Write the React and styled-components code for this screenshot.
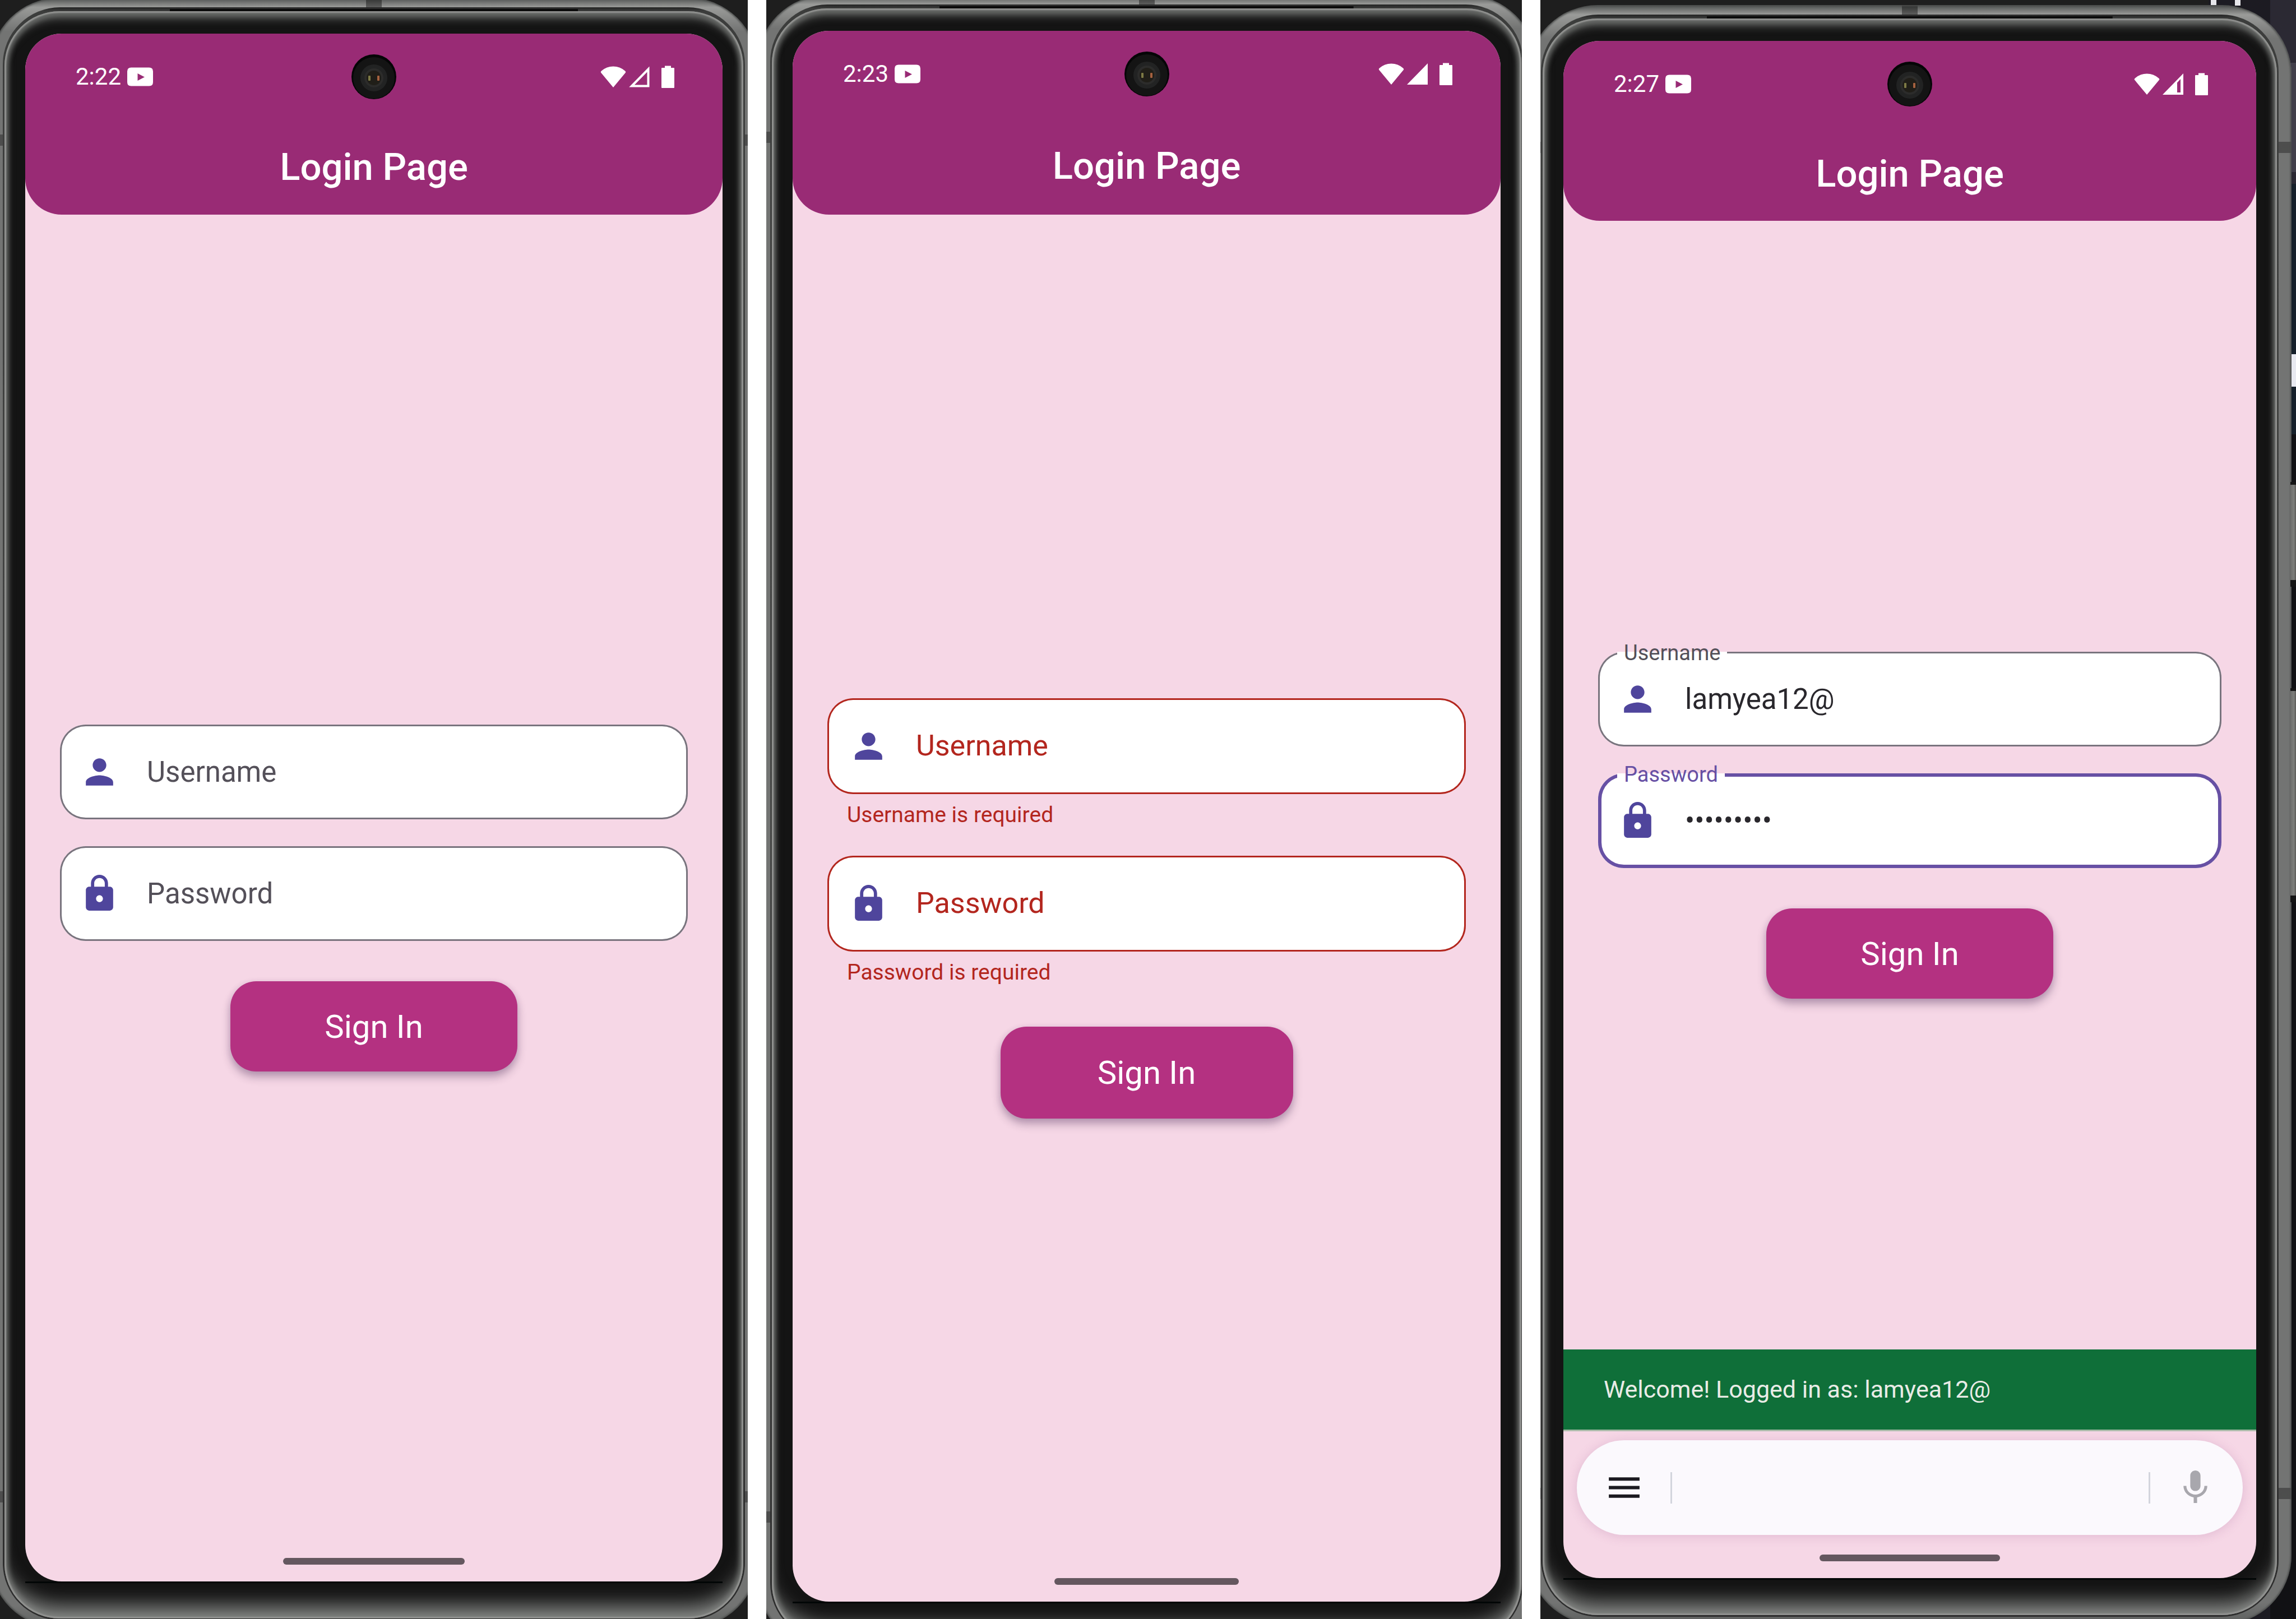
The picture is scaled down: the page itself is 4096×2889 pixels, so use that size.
import React, { useId } from "react";
import styled, { createGlobalStyle, css } from "styled-components";
import { MdLock, MdMenu, MdMic, MdPerson } from "react-icons/md";

const color = {
  plum: "#992b75",
  blush: "#f6d7e6",
  magenta: "#b43181",
  iris: "#4f459c",
  outline: "#79747e",
  focus: "#6750a4",
  error: "#b3261e",
  ink: "#29272c",
  inkSoft: "#545059",
  green: "#0f6f39",
};

const GlobalStyle = createGlobalStyle`
  *, *::before, *::after { box-sizing: border-box; }
  body { margin: 0; background: #fff; font-family: Roboto, "Noto Sans", sans-serif; }
  button, input { font: inherit; }
  svg { display: block; }
`;

/* ---------- Board with the three devices ---------- */

const Board = styled.main`
  display: grid;
  grid-template-columns: 1334fr 1348fr 1348fr;
  gap: 33px;
  height: 100vh;
`;

const desktopBackdrop = css`
  background:
    linear-gradient(#e8e9f0, #e8e9f0) right 0 top 632px / 8px 58px no-repeat,
    linear-gradient(#e6e6ea, #e6e6ea) right 142px top 0 / 10px 10px no-repeat,
    linear-gradient(#e6e6ea, #e6e6ea) right 99px top 0 / 10px 10px no-repeat,
    linear-gradient(
        #2b2933 0 112px,
        #413f4a 112px 307px,
        #2b2933 307px 328px,
        #16202a 328px 775px,
        #111114 775px
      )
      right 0 top 0 / 46px 100% no-repeat,
    linear-gradient(#1c1b22, #1c1b22) right 46px top 0 / 110px 100% no-repeat,
    #1e1e1e;
`;

const Panel = styled.section`
  position: relative;
  display: flex;
  min-width: 0;
  overflow: hidden;
  background: #1e1e1e;
  ${(p) => p.$desktop && desktopBackdrop}
`;

const Body = styled.div`
  flex: 1;
  display: flex;
  margin: ${(p) => p.$margin};
  padding: 17px 23px 14px;
  border-radius: 124px;
  background:
    linear-gradient(#0005, #0005) 0 244px / 100% 20px no-repeat,
    linear-gradient(#0005, #0005) 0 calc(100% - 224px) / 100% 20px no-repeat,
    linear-gradient(#0006, #0006) 50% 0 / 28px 17px no-repeat,
    linear-gradient(#4c4e4d, #9a9b99 17px, #737473 60px, #737473 calc(100% - 40px), #5c5e5d);
  box-shadow: inset 0 0 3px 2px #4c4e4d;
`;

const Groove = styled.div`
  flex: 1;
  display: flex;
  padding: 7px 3px 3px;
  border-radius: 102px;
  background:
    linear-gradient(#0b0b0b, #0b0b0b) 50% 3px / 55% 4px no-repeat,
    linear-gradient(#242424, #3c3d3c 7px, #444544 50%, #2c2c2c);
`;

const Bezel = styled.div`
  flex: 1;
  display: flex;
  padding: 40px 37px 63px;
  border-radius: 98px;
  background: #141414;
  box-shadow:
    inset 0 0 2px 3px #929391,
    inset 0 20px 16px -8px #656765,
    inset 0 -40px 32px -16px #7d7f7d,
    inset 0 0 8px 7px #6a6c6a;
`;

const ScreenSeat = styled.div`
  flex: 1;
  display: flex;
  min-width: 0;
  border-bottom: 3px solid #020606;
`;

const Screen = styled.div`
  position: relative;
  flex: 1;
  display: flex;
  flex-direction: column;
  min-width: 0;
  overflow: hidden;
  border-radius: 65px;
  background: ${color.blush};
`;

const SideButton = styled.span`
  position: absolute;
  right: 0;
  top: ${(p) => p.$top}px;
  width: 10px;
  height: ${(p) => p.$height}px;
  border: solid #151515;
  border-width: 5px 0 12px;
  background: linear-gradient(90deg, #6c6c6a, #7e7f7c 60%, #5b5a57);
`;

/* ---------- App header ---------- */

const Header = styled.header`
  flex: none;
  border-radius: 0 0 65px 65px;
  background: ${color.plum};
  color: #fff;
`;

const StatusBar = styled.div`
  display: flex;
  align-items: center;
  justify-content: space-between;
  height: 154px;
  padding: 0 86px 0 90px;
`;

const StatusGroup = styled.div`
  display: flex;
  align-items: center;
  gap: ${(p) => p.$gap}px;
`;

const Clock = styled.time`
  font-size: 42px;
  line-height: 48px;
`;

const BatterySlot = styled.span`
  padding-left: 16px;
`;

const Camera = styled.span`
  position: absolute;
  top: 36px;
  left: 50%;
  width: 82px;
  height: 82px;
  margin-left: -41px;
`;

const Title = styled.h1`
  margin: 0;
  font-size: 67px;
  font-weight: 500;
  line-height: ${(p) => p.$height}px;
  text-align: center;
`;

const YoutubeGlyph = () => (
  <svg width="48" height="34" viewBox="0 0 48 34" fill="#fff" aria-hidden="true">
    <path
      fillRule="evenodd"
      d="M8 0.5H40Q47 0.5 47 7.500V26.500Q47 33.500 40 33.500H8Q1 33.500 1 26.500V7.500Q1 0.500 8 0.500ZM19.500 11V24L32 17.500Z"
    />
  </svg>
);

const WifiGlyph = () => (
  <svg width="46" height="40" viewBox="0 0 46 40" fill="#fff" aria-hidden="true">
    <path d="M23 39L1 12.500Q0 11 2 9.500Q11 1.500 23 1.500Q35 1.500 44 9.500Q46 11 45 12.500Z" />
  </svg>
);

const SignalGlyph = ({ level }) => (
  <svg width="39" height="40" viewBox="0 0 39 40" aria-hidden="true">
    {level === "full" && <path d="M1 39L38 1V39Z" fill="#fff" />}
    {level === "empty" && (
      <path d="M6 36.500H35.500V6.500Z" fill="none" stroke="#fff" strokeWidth="4" />
    )}
    {level === "partial" && (
      <path fillRule="evenodd" d="M1 39L38 1V39ZM27 17.500L33 11V35H27Z" fill="#fff" />
    )}
  </svg>
);

const BatteryGlyph = () => (
  <svg width="23" height="42" viewBox="0 0 23 42" fill="#fff" aria-hidden="true">
    <path d="M6 5V1.500H17V5H22Q23 5 23 6V40Q23 41 22 41H1Q0 41 0 40V6Q0 5 1 5Z" />
  </svg>
);

const Lens = () => (
  <svg width="82" height="82" viewBox="0 0 82 82" aria-hidden="true">
    <circle cx="41" cy="41" r="40" fill="#050506" />
    <circle cx="41" cy="43" r="37" fill="#141414" />
    <circle cx="41" cy="43" r="24" fill="#222323" />
    <circle cx="41" cy="43" r="17" fill="#2c2c2b" />
    <circle cx="41" cy="43" r="13" fill="#201e18" />
    <rect x="31" y="39" width="4" height="9" rx="1" fill="#7d7a45" />
    <rect x="47" y="39" width="4" height="9" rx="1" fill="#a5613f" />
  </svg>
);

/* ---------- Login form ---------- */

const Content = styled.div`
  position: relative;
  flex: 1;
  display: flex;
  flex-direction: column;
  justify-content: center;
`;

const Form = styled.form`
  display: flex;
  flex-direction: column;
  gap: ${(p) => (p.$large ? 50 : 48)}px;
  padding: 0 62px;
`;

const stroke = (p) =>
  p.$state === "error"
    ? `3px ${color.error}`
    : p.$state === "focus"
    ? `6px ${color.focus}`
    : `3px ${color.outline}`;

const FieldBox = styled.div`
  position: relative;
  display: flex;
  align-items: center;
  gap: 48px;
  height: ${(p) => (p.$large ? 171 : 169)}px;
  padding: 0 ${(p) => (p.$large ? 37 : 34)}px;
  border-radius: 46px;
  background: #fff;
  color: ${color.iris};
  box-shadow: inset 0 0 0 ${stroke};
`;

const labelColor = { error: color.error, focus: color.focus, idle: color.inkSoft };

const Label = styled.label`
  position: absolute;
  color: ${(p) => labelColor[p.$state]};
  ${(p) =>
    p.$floating
      ? css`
          top: -18px;
          left: 34px;
          padding: 0 12px;
          font-size: 38px;
          line-height: 40px;
          background: linear-gradient(${color.blush} 18px, #fff 18px);
        `
      : css`
          left: ${p.$large ? 158 : 155}px;
          font-size: ${p.$large ? 52 : 51}px;
          line-height: 60px;
        `}
`;

const Input = styled.input`
  flex: 1;
  min-width: 0;
  height: 72px;
  padding: 0;
  border: 0;
  outline: 0;
  background: transparent;
  color: ${color.ink};
  font-size: 51px;
`;

const Helper = styled.p`
  margin: 14px 0 0;
  padding-left: 35px;
  color: ${color.error};
  font-size: 39px;
  line-height: 46px;
`;

const SignIn = styled.button`
  align-self: center;
  width: ${(p) => (p.$large ? 522 : 512)}px;
  height: ${(p) => (p.$large ? 164 : 161)}px;
  margin-top: 24px;
  padding: 0;
  border: 0;
  border-radius: 46px;
  background: ${color.magenta};
  color: #fff;
  font-size: 58px;
  box-shadow: 0 10px 16px rgba(60, 30, 70, 0.32), 0 2px 12px rgba(90, 40, 120, 0.12);
`;

function Field({ icon: Icon, label, type = "text", value = "", state = "idle", error, large }) {
  const id = useId();
  return (
    <div>
      <FieldBox $state={state} $large={large}>
        <Icon size={73} aria-hidden="true" />
        <Label htmlFor={id} $state={state} $floating={value !== ""} $large={large}>
          {label}
        </Label>
        <Input id={id} type={type} defaultValue={value} autoComplete="off" />
      </FieldBox>
      {error && <Helper>{error}</Helper>}
    </div>
  );
}

/* ---------- Bottom of the screen ---------- */

const Snackbar = styled.div`
  position: absolute;
  right: 0;
  bottom: -3px;
  left: 0;
  padding: 46px 72px 47px;
  border-bottom: 3px solid #aabbaa;
  background: ${color.green};
  color: #e9ece6;
  font-size: 43px;
  line-height: 50px;
`;

const KeyboardTray = styled.div`
  flex: none;
  height: 265px;
  padding: 19px 24px 0;
`;

const Toolbar = styled.div`
  display: flex;
  align-items: center;
  height: 169px;
  padding: 0 48px;
  border-radius: 85px;
  background: #fbf9fd;
  box-shadow: 0 2px 20px rgba(140, 70, 130, 0.2);
`;

const ToolButton = styled.button`
  display: flex;
  padding: 0;
  border: 0;
  background: none;
  color: ${(p) => (p.$muted ? "#a8a7ad" : "#1b1a20")};
`;

const Divider = styled.span`
  width: 3px;
  height: 56px;
  margin: 0 44px 0 46px;
  background: #d3d5dd;
`;

const Spacer = styled.span`
  flex: 1;
`;

const HomeHandle = styled.span`
  position: absolute;
  bottom: 30px;
  left: 37%;
  width: 26%;
  height: 12px;
  border-radius: 6px;
  background: #64575f;
`;

/* ---------- Device ---------- */

function Phone({ time, signal, margin, titleHeight, large, username, password, snackbar, desktop }) {
  return (
    <Panel $desktop={desktop}>
      {desktop && (
        <>
          <SideButton $top={860} $height={187} />
          <SideButton $top={1228} $height={382} />
        </>
      )}
      <Body $margin={margin}>
        <Groove>
          <Bezel>
            <ScreenSeat>
              <Screen>
                <Header>
                  <StatusBar>
                    <StatusGroup $gap={10}>
                      <Clock>{time}</Clock>
                      <YoutubeGlyph />
                    </StatusGroup>
                    <StatusGroup $gap={4}>
                      <WifiGlyph />
                      <SignalGlyph level={signal} />
                      <BatterySlot>
                        <BatteryGlyph />
                      </BatterySlot>
                    </StatusGroup>
                  </StatusBar>
                  <Title $height={titleHeight}>Login Page</Title>
                  <Camera>
                    <Lens />
                  </Camera>
                </Header>
                <Content>
                  <Form $large={large} onSubmit={(e) => e.preventDefault()}>
                    <Field icon={MdPerson} label="Username" large={large} {...username} />
                    <Field
                      icon={MdLock}
                      label="Password"
                      type="password"
                      large={large}
                      {...password}
                    />
                    <SignIn type="submit" $large={large}>
                      Sign In
                    </SignIn>
                  </Form>
                  {snackbar && <Snackbar role="status">{snackbar}</Snackbar>}
                </Content>
                {snackbar && (
                  <KeyboardTray>
                    <Toolbar>
                      <ToolButton type="button" aria-label="Menu">
                        <MdMenu size={73} />
                      </ToolButton>
                      <Divider />
                      <Spacer />
                      <Divider />
                      <ToolButton type="button" aria-label="Voice input" $muted>
                        <MdMic size={73} />
                      </ToolButton>
                    </Toolbar>
                  </KeyboardTray>
                )}
                <HomeHandle />
              </Screen>
            </ScreenSeat>
          </Bezel>
        </Groove>
      </Body>
    </Panel>
  );
}

export default function App() {
  return (
    <>
      <GlobalStyle />
      <Board>
        <Phone time="2:22" signal="empty" margin="-4px -18px -16px -18px" titleHeight={169} />
        <Phone
          time="2:23"
          signal="full"
          margin="-9px -25px -52px -16px"
          titleHeight={174}
          large
          username={{ state: "error", error: "Username is required" }}
          password={{ state: "error", error: "Password is required" }}
        />
        <Phone
          time="2:27"
          signal="partial"
          margin="9px 8px -10px -22px"
          titleHeight={167}
          username={{ value: "lamyea12@" }}
          password={{ value: "lamyea12@", state: "focus" }}
          snackbar="Welcome! Logged in as: lamyea12@"
          desktop
        />
      </Board>
    </>
  );
}
